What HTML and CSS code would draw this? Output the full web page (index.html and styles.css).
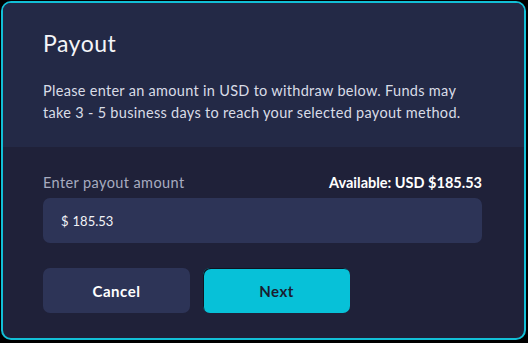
FILE: index.html
```html
<!DOCTYPE html>
<html lang="en">
<head>
<meta charset="utf-8">
<title>Payout</title>
<link rel="stylesheet" href="styles.css">
</head>
<body>
<div class="card">
  <div class="card-head">
    <h1 class="title">Payout</h1>
    <p class="desc">Please enter an amount in USD to withdraw below. Funds may take 3 - 5 business days to reach your selected payout method.</p>
  </div>
  <div class="card-body">
    <div class="field-row">
      <label class="label" for="amount">Enter payout amount</label>
      <span class="available">Available: USD $185.53</span>
    </div>
    <div class="input">
      <span class="currency">$</span>
      <span class="value">185.53</span>
    </div>
    <div class="actions">
      <button class="btn btn-cancel">Cancel</button>
      <button class="btn btn-next">Next</button>
    </div>
  </div>
</div>
</body>
</html>
```
FILE: styles.css
```css
html, body {
  margin: 0;
  padding: 0;
  background: #000;
  width: 528px;
  height: 343px;
  overflow: hidden;
}
body {
  padding: 1px 0 0 1px;
  box-sizing: border-box;
  font-family: "Lato", "Noto Sans", sans-serif;
}
.card {
  width: 525px;
  height: 339px;
  box-sizing: border-box;
  border: 2px solid #12bfd6;
  border-radius: 10px;
  background: #1f2139;
  overflow: hidden;
  display: flex;
  flex-direction: column;
}
.card-head {
  background: #232946;
  height: 144px;
  box-sizing: border-box;
  padding: 25px 40px 0;
}
.title {
  margin: 0;
  font-size: 23px;
  font-weight: 400;
  letter-spacing: 0.5px;
  line-height: 30px;
  color: #f4f5f8;
}
.desc {
  margin: 22px 0 0;
  font-size: 14.5px;
  letter-spacing: 0.3px;
  line-height: 22px;
  color: #d9dce6;
}
.card-body {
  padding: 26px 42px 0 40px;
}
.field-row {
  display: flex;
  justify-content: space-between;
  align-items: center;
  height: 18px;
}
.label {
  font-size: 14.5px;
  letter-spacing: 0.4px;
  color: #a8acc0;
}
.available {
  font-size: 14.5px;
  font-weight: 700;
  color: #ffffff;
}
.input {
  margin-top: 7px;
  height: 45px;
  background: #2d3457;
  border-radius: 7px;
  display: flex;
  align-items: center;
  padding-left: 18px;
  gap: 4px;
  font-size: 13px;
  color: #f2f3f7;
}
.actions {
  display: flex;
  gap: 13px;
  margin-top: 25px;
}
.btn {
  width: 147px;
  height: 45px;
  border: none;
  border-radius: 7px;
  font-family: inherit;
  font-size: 15px;
  letter-spacing: 0.5px;
  font-weight: 700;
}
.btn-cancel {
  background: #2d3457;
  color: #ffffff;
}
.btn-next {
  background: #07c1d8;
  color: #1a1d30;
  box-shadow: inset 1px 1px 0 #0d1420;
}
```
